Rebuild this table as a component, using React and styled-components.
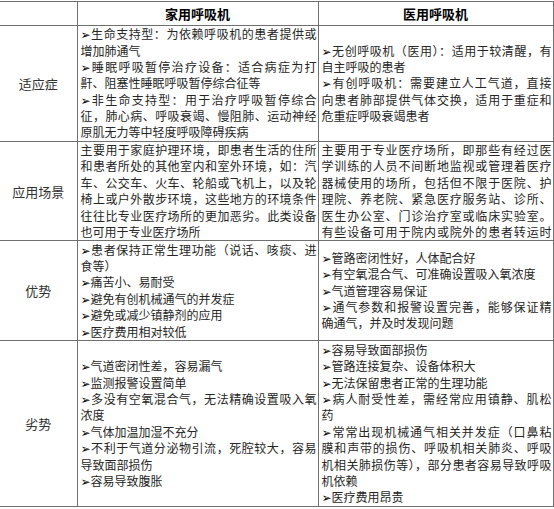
import React from 'react';
import styled, { createGlobalStyle } from 'styled-components';

const GlobalStyle = createGlobalStyle`
  html, body {
    margin: 0;
    padding: 0;
    background: #fff;
  }
  body {
    font-family: "Noto Sans CJK SC", "Noto Sans", sans-serif;
  }
`;

const Page = styled.div`
  padding-top: 1px;
  width: 554px;
`;

const Table = styled.table`
  border-collapse: collapse;
  table-layout: fixed;
  width: 553px;
`;

const Row = styled.tr`
  height: ${p => p.$h}px;
`;

const HeadCell = styled.th`
  border: 1px solid #707070;
  padding: 0;
  font-size: 13px;
  font-weight: 700;
  color: #000;
  text-align: center;
  vertical-align: middle;
  &:first-child {
    border-left: none;
  }
`;

const LabelCell = styled.td`
  border: 1px solid #707070;
  border-left: none;
  padding: 0;
  font-size: 13px;
  color: #333;
  text-align: center;
  vertical-align: middle;
`;

const BodyCell = styled.td`
  border: 1px solid #707070;
  padding: 0 1px 0 3px;
  font-size: 12px;
  line-height: 16.4px;
  color: #262626;
  vertical-align: middle;
`;

const Line = styled.div`
  height: 16.4px;
  white-space: nowrap;
  text-align: justify;
  text-align-last: ${p => (p.$full ? 'justify' : 'left')};
`;

const Arrow = styled.span`
  font-family: "DejaVu Sans", sans-serif;
  font-size: 12px;
  line-height: 0;
  color: #000;
`;

const rows = [
  {
    label: '适应症',
    h: 116,
    home: [
      ['➢生命支持型：为依赖呼吸机的患者提供或', '增加肺通气'],
      ['➢睡眠呼吸暂停治疗设备：适合病症为打', '鼾、阻塞性睡眠呼吸暂停综合征等'],
      ['➢非生命支持型：用于治疗呼吸暂停综合', '征，肺心病、呼吸衰竭、慢阻肺、运动神经', '原肌无力等中轻度呼吸障碍疾病'],
    ],
    medical: [
      ['➢无创呼吸机（医用）：适用于较清醒，有', '自主呼吸的患者'],
      ['➢有创呼吸机：需要建立人工气道，直接', '向患者肺部提供气体交换，适用于重症和', '危重症呼吸衰竭患者'],
    ],
  },
  {
    label: '应用场景',
    h: 99,
    home: [
      [
        '主要用于家庭护理环境，即患者生活的住所',
        '和患者所处的其他室内和室外环境，如：汽',
        '车、公交车、火车、轮船或飞机上，以及轮',
        '椅上或户外散步环境，这些地方的环境条件',
        '往往比专业医疗场所的更加恶劣。此类设备',
        '也可用于专业医疗场所',
      ],
    ],
    medical: [
      [
        '主要用于专业医疗场所，即那些有经过医',
        '学训练的人员不间断地监视或管理着医疗',
        '器械使用的场所，包括但不限于医院、护',
        '理院、养老院、紧急医疗服务站、诊所、',
        '医生办公室、门诊治疗室或临床实验室。',
        '有些设备可用于院内或院外的患者转运时',
      ],
    ],
    medicalFullLast: true,
  },
  {
    label: '优势',
    h: 100,
    home: [
      ['➢患者保持正常生理功能（说话、咳痰、进', '食等）'],
      ['➢痛苦小、易耐受'],
      ['➢避免有创机械通气的并发症'],
      ['➢避免或减少镇静剂的应用'],
      ['➢医疗费用相对较低'],
    ],
    medical: [
      ['➢管路密闭性好，人体配合好'],
      ['➢有空氧混合气、可准确设置吸入氧浓度'],
      ['➢气道管理容易保证'],
      ['➢通气参数和报警设置完善，能够保证精', '确通气，并及时发现问题'],
    ],
  },
  {
    label: '劣势',
    h: 166,
    home: [
      ['➢气道密闭性差，容易漏气'],
      ['➢监测报警设置简单'],
      ['➢多没有空氧混合气，无法精确设置吸入氧', '浓度'],
      ['➢气体加温加湿不充分'],
      ['➢不利于气道分泌物引流，死腔较大，容易', '导致面部损伤'],
      ['➢容易导致腹胀'],
    ],
    medical: [
      ['➢容易导致面部损伤'],
      ['➢管路连接复杂、设备体积大'],
      ['➢无法保留患者正常的生理功能'],
      ['➢病人耐受性差，需经常应用镇静、肌松', '药'],
      [
        '➢常常出现机械通气相关并发症（口鼻粘',
        '膜和声带的损伤、呼吸机相关肺炎、呼吸',
        '机相关肺损伤等），部分患者容易导致呼吸',
        '机依赖',
      ],
      ['➢医疗费用昂贵'],
    ],
  },
];

function TextLine({ text, full }) {
  const bullet = text.startsWith('➢');
  return (
    <Line $full={full}>
      {bullet && <Arrow>➢</Arrow>}
      {bullet ? text.slice(1) : text}
    </Line>
  );
}

function Paragraphs({ items, fullLast }) {
  return items.map((para, i) => (
    <React.Fragment key={i}>
      {para.map((text, j) => (
        <TextLine key={j} text={text} full={j < para.length - 1 || fullLast} />
      ))}
    </React.Fragment>
  ));
}

export default function App() {
  return (
    <Page>
      <GlobalStyle />
      <Table>
        <colgroup>
          <col style={{ width: 77 }} />
          <col style={{ width: 241 }} />
          <col style={{ width: 235 }} />
        </colgroup>
        <tbody>
          <Row $h={24}>
            <HeadCell />
            <HeadCell>家用呼吸机</HeadCell>
            <HeadCell>医用呼吸机</HeadCell>
          </Row>
          {rows.map(r => (
            <Row key={r.label} $h={r.h}>
              <LabelCell>{r.label}</LabelCell>
              <BodyCell>
                <Paragraphs items={r.home} />
              </BodyCell>
              <BodyCell>
                <Paragraphs items={r.medical} fullLast={r.medicalFullLast} />
              </BodyCell>
            </Row>
          ))}
        </tbody>
      </Table>
    </Page>
  );
}
